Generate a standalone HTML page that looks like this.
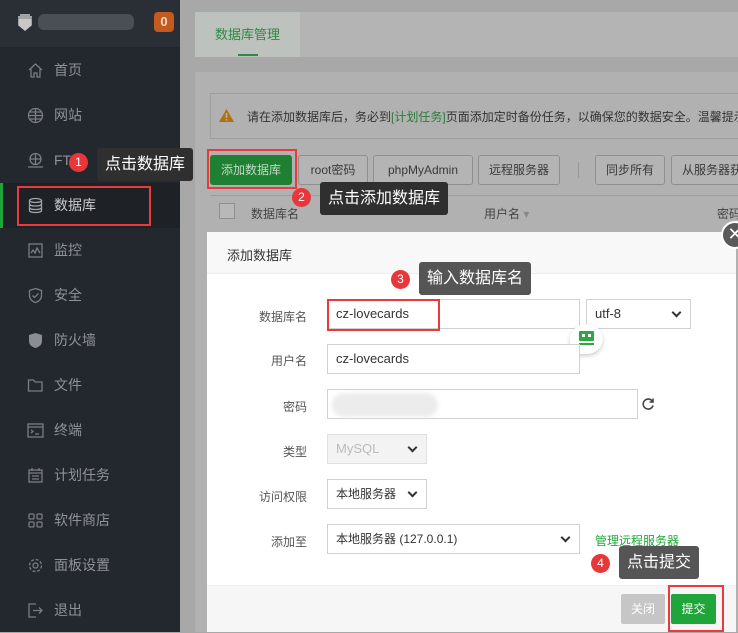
<!DOCTYPE html>
<html><head><meta charset="utf-8"><style>
*{margin:0;padding:0;box-sizing:border-box}
body{width:738px;height:632px;overflow:hidden;position:relative;background:#a8a8a8;font-family:"Liberation Sans","Noto Sans CJK SC",sans-serif;font-size:13px;color:#333}
.a{position:absolute;white-space:nowrap}
.side{left:0;top:0;width:180px;height:632px;background:#23272e}
.top{left:0;top:0;width:180px;height:47px;background:#2a2e35}
.mi{left:0;width:180px;height:45px;color:#8f9297;font-size:14px;line-height:45px}
.mi span{position:absolute;left:54px}
.mi svg{position:absolute;left:27px;top:14px}
.btn{height:30px;border:1px solid #8f8f8f;border-radius:3px;background:#b4b4b4;color:#3a3a3a;font-size:12px;line-height:28px;text-align:center}
.tip{background:#2f2f2f;color:#fff;font-size:16px;border-radius:3px;height:33px;line-height:33px;padding:0 8px}
.tip2{background:#555;color:#fff;font-size:16px;border-radius:3px;height:33px;line-height:33px;padding:0 8px}
.num{width:19px;height:19px;border-radius:50%;background:#e8373a;color:#fff;font-size:12px;text-align:center;line-height:19px}
.red{border:2px solid #e93b3b}
.lab{width:90px;text-align:right;font-size:12px;color:#555;left:217px}
.inp{height:30px;border:1px solid #d0d0d0;background:#fff;font-size:13px;color:#333;line-height:28px;padding-left:8px}
.sel::after{content:"";position:absolute;right:10px;top:9px;width:5px;height:5px;border-right:2px solid #333;border-bottom:2px solid #333;transform:rotate(45deg)}
</style></head><body>
<div class="a side"></div>
<div class="a top"></div>
<svg class="a" style="left:16px;top:13px" width="18" height="18" viewBox="0 0 18 18"><path d="M2 4h14M4 2h10M3 6h12v6l-6 5-6-5z" fill="#c8c8c8" stroke="#c8c8c8" stroke-width="1.5"/></svg>
<div class="a" style="left:38px;top:14px;width:96px;height:16px;background:#4a4e55;border-radius:6px"></div>
<div class="a" style="left:154px;top:12px;width:20px;height:20px;border-radius:4px;background:#c45a1e;color:#f2d8c6;font-size:13px;font-weight:bold;text-align:center;line-height:20px">0</div>

<div class="a mi" style="top:48px"><svg width="17" height="17" viewBox="0 0 17 17" fill="none" stroke="#7a7d82" stroke-width="1.3"><path d="M2 8L8.5 2 15 8M4 7v8h3v-4h3v4h3V7"/></svg><span>首页</span></div>
<div class="a mi" style="top:93px"><svg width="17" height="17" viewBox="0 0 17 17" fill="none" stroke="#7a7d82" stroke-width="1.3"><circle cx="8.5" cy="8.5" r="7"/><path d="M1.5 8.5h14M8.5 1.5v14M3 5h11M3 12h11"/></svg><span>网站</span></div>
<div class="a mi" style="top:138px"><svg width="17" height="17" viewBox="0 0 17 17" fill="none" stroke="#7a7d82" stroke-width="1.3"><circle cx="8.5" cy="7" r="5.5"/><path d="M3 7h11M8.5 1.5v11M1 15h15"/></svg><span>FTP</span></div>
<div class="a" style="left:0;top:183px;width:180px;height:45px;background:#1e2126"></div>
<div class="a" style="left:0;top:183px;width:3px;height:45px;background:#20a53a"></div>
<div class="a mi" style="top:183px;color:#c8cacd"><svg width="17" height="17" viewBox="0 0 17 17" fill="none" stroke="#a0a3a8" stroke-width="1.3"><ellipse cx="8.5" cy="3.5" rx="6" ry="2"/><path d="M2.5 3.5v10c0 1.2 2.7 2 6 2s6-.8 6-2v-10M2.5 7c0 1.2 2.7 2 6 2s6-.8 6-2M2.5 10.5c0 1.2 2.7 2 6 2s6-.8 6-2"/></svg><span>数据库</span></div>
<div class="a red" style="left:17px;top:186px;width:134px;height:40px"></div>
<div class="a mi" style="top:228px"><svg width="17" height="17" viewBox="0 0 17 17" fill="none" stroke="#7a7d82" stroke-width="1.3"><rect x="2" y="2" width="13" height="13"/><path d="M4 11l2-3 2 3 2-5 3 5"/></svg><span>监控</span></div>
<div class="a mi" style="top:273px"><svg width="17" height="17" viewBox="0 0 17 17" fill="none" stroke="#7a7d82" stroke-width="1.3"><path d="M8.5 1.5l6 2v5c0 4-3 6-6 7-3-1-6-3-6-7v-5z M5.5 8.5l2 2 4-4"/></svg><span>安全</span></div>
<div class="a mi" style="top:318px"><svg width="17" height="17" viewBox="0 0 17 17"><path d="M2 3l6.5-2 6.5 2v6c0 4-3 6-6.5 7-3.5-1-6.5-3-6.5-7z" fill="#8a8d92"/></svg><span>防火墙</span></div>
<div class="a mi" style="top:363px"><svg width="17" height="17" viewBox="0 0 17 17" fill="none" stroke="#7a7d82" stroke-width="1.3"><path d="M1.5 3h5l1.5 2h7v9h-13.5z"/></svg><span>文件</span></div>
<div class="a mi" style="top:408px"><svg width="17" height="17" viewBox="0 0 17 17" fill="none" stroke="#7a7d82" stroke-width="1.3"><rect x="1" y="2" width="15" height="13"/><path d="M1 5h15M4 8l2 1.5L4 11M8 12h4"/></svg><span>终端</span></div>
<div class="a mi" style="top:453px"><svg width="17" height="17" viewBox="0 0 17 17" fill="none" stroke="#7a7d82" stroke-width="1.3"><rect x="2" y="3" width="13" height="12"/><path d="M5 1v3M12 1v3M2 6h13M5 9h7M5 12h7"/></svg><span>计划任务</span></div>
<div class="a mi" style="top:498px"><svg width="17" height="17" viewBox="0 0 17 17" fill="none" stroke="#7a7d82" stroke-width="1.3"><rect x="2" y="2" width="5" height="5" rx="1"/><rect x="10" y="2" width="5" height="5" rx="1"/><rect x="2" y="10" width="5" height="5" rx="1"/><rect x="10" y="10" width="5" height="5" rx="1"/></svg><span>软件商店</span></div>
<div class="a mi" style="top:543px"><svg width="17" height="17" viewBox="0 0 17 17" fill="none" stroke="#7a7d82" stroke-width="1.3"><circle cx="8.5" cy="8.5" r="2.5"/><circle cx="8.5" cy="8.5" r="6" stroke-dasharray="3 1.7"/></svg><span>面板设置</span></div>
<div class="a mi" style="top:588px"><svg width="17" height="17" viewBox="0 0 17 17" fill="none" stroke="#7a7d82" stroke-width="1.3"><path d="M9 2H2v13h7M6 8.5h9M12 5.5l3 3-3 3"/></svg><span>退出</span></div>

<!-- main -->
<div class="a" style="left:195px;top:12px;width:543px;height:45px;background:#b4b4b4"></div>
<div class="a" style="left:195px;top:12px;width:105px;height:45px;background:#bec2be;color:#2d8a3e;font-size:13px;text-align:center;line-height:45px">数据库管理</div>
<div class="a" style="left:238px;top:54px;width:20px;height:2px;background:#2d8a3e"></div>
<div class="a" style="left:195px;top:72px;width:543px;height:560px;background:#b1b1b1"></div>
<div class="a" style="left:210px;top:93px;width:528px;height:46px;border:1px solid #9e9e9e;border-right:none;background:#b1b1b1"></div>
<svg class="a" style="left:219px;top:109px" width="15" height="13" viewBox="0 0 15 13"><path d="M7.5 0L15 13H0z" fill="#b0720f"/><path d="M7.5 4v5M7.5 10v1.5" stroke="#b1b1b1" stroke-width="1.6"/></svg>
<div class="a" style="left:247px;top:108px;font-size:12px;color:#333">请在添加数据库后，务必到<span style="color:#2d7a3a">[计划任务]</span>页面添加定时备份任务，以确保您的数据安全。温馨提示</div>
<div class="a btn" style="left:210px;top:155px;width:82px;background:#1f7f32;border-color:#1f7f32;color:#bfdcc4">添加数据库</div>
<div class="a red" style="left:207px;top:149px;width:90px;height:40px"></div>
<div class="a btn" style="left:298px;top:155px;width:70px">root密码</div>
<div class="a btn" style="left:373px;top:155px;width:100px">phpMyAdmin</div>
<div class="a btn" style="left:478px;top:155px;width:82px">远程服务器</div>
<div class="a" style="left:578px;top:162px;width:1px;height:16px;background:#999"></div>
<div class="a btn" style="left:595px;top:155px;width:70px">同步所有</div>
<div class="a btn" style="left:671px;top:155px;width:80px;text-align:left;padding-left:10px">从服务器获</div>
<div class="a" style="left:210px;top:195px;width:528px;height:1px;background:#9e9e9e"></div>
<div class="a" style="left:219px;top:203px;width:16px;height:16px;border:1px solid #8f8f8f;background:#b8b8b8"></div>
<div class="a" style="left:251px;top:205px;font-size:12px;color:#444">数据库名</div>
<div class="a" style="left:484px;top:205px;font-size:12px;color:#444">用户名 <span style="color:#888">▾</span></div>
<div class="a" style="left:717px;top:205px;font-size:12px;color:#444">密码</div>

<!-- tips -->
<div class="a num" style="left:69px;top:153px">1</div>
<div class="a tip" style="left:97px;top:148px">点击数据库</div>
<div class="a num" style="left:292px;top:188px">2</div>
<div class="a tip" style="left:320px;top:182px">点击添加数据库</div>

<!-- modal -->
<div class="a" style="left:207px;top:232px;width:529px;height:400px;background:#fff"></div>
<div class="a" style="left:207px;top:232px;width:529px;height:42px;background:#f8f8f8;border-bottom:1px solid #eee;font-size:13px;color:#333;padding:13px 0 0 20px">添加数据库</div>
<div class="a" style="left:721px;top:221px;width:28px;height:28px;border-radius:50%;background:#5a5a5a;border:2px solid #fff;color:#fff;font-size:18px;line-height:22px;text-align:center">✕</div>
<div class="a num" style="left:391px;top:270px">3</div>
<div class="a tip2" style="left:419px;top:262px">输入数据库名</div>

<div class="a lab" style="top:308px">数据库名</div>
<div class="a inp" style="left:327px;top:299px;width:253px">cz-lovecards</div>
<div class="a red" style="left:327px;top:299px;width:113px;height:32px"></div>
<div class="a inp sel" style="left:586px;top:299px;width:105px">utf-8</div>
<div class="a" style="left:570px;top:324px;width:33px;height:30px;background:#fff;border-radius:50% 50% 50% 0;box-shadow:0 2px 4px rgba(0,0,0,.2)"></div>
<div class="a" style="left:579px;top:331px;width:15px;height:10px;background:#2ca843;border-radius:1px"></div>
<div class="a" style="left:582px;top:334px;width:3px;height:3px;background:#fff"></div>
<div class="a" style="left:588px;top:334px;width:3px;height:3px;background:#fff"></div>
<div class="a" style="left:579px;top:343px;width:15px;height:2px;background:#2ca843"></div>

<div class="a lab" style="top:352px">用户名</div>
<div class="a inp" style="left:327px;top:344px;width:253px">cz-lovecards</div>
<div class="a lab" style="top:398px">密码</div>
<div class="a inp" style="left:327px;top:389px;width:311px"></div>
<div class="a" style="left:332px;top:393px;width:106px;height:24px;background:#ececec;border-radius:12px;filter:blur(2px)"></div>
<svg class="a" style="left:641px;top:397px" width="14" height="14" viewBox="0 0 14 14" fill="none" stroke="#444" stroke-width="1.6"><path d="M11.5 4.5A5 5 0 1 0 12 8.5"/><path d="M12 1.5v3.5H8.5" /></svg>
<div class="a lab" style="top:443px">类型</div>
<div class="a inp sel" style="left:327px;top:434px;width:100px;background:#f3f3f3;color:#bbb;border-color:#e0e0e0">MySQL</div>
<div class="a lab" style="top:488px">访问权限</div>
<div class="a inp sel" style="left:327px;top:479px;width:100px;font-size:12px">本地服务器</div>
<div class="a lab" style="top:533px">添加至</div>
<div class="a inp sel" style="left:327px;top:524px;width:253px;font-size:12px">本地服务器 (127.0.0.1)</div>
<div class="a" style="left:595px;top:532px;font-size:12px;color:#20a53a">管理远程服务器</div>
<div class="a num" style="left:591px;top:554px">4</div>
<div class="a tip2" style="left:619px;top:546px">点击提交</div>

<div class="a" style="left:207px;top:585px;width:529px;height:47px;background:#f6f6f6;border-top:1px solid #eee"></div>
<div class="a" style="left:621px;top:594px;width:44px;height:30px;background:#c6c6c6;color:#fff;font-size:12px;text-align:center;line-height:30px;border-radius:2px">关闭</div>
<div class="a" style="left:671px;top:594px;width:45px;height:30px;background:#20a53a;color:#fff;font-size:12px;text-align:center;line-height:30px;border-radius:2px">提交</div>
<div class="a red" style="left:668px;top:585px;width:56px;height:47px"></div>
</body></html>
